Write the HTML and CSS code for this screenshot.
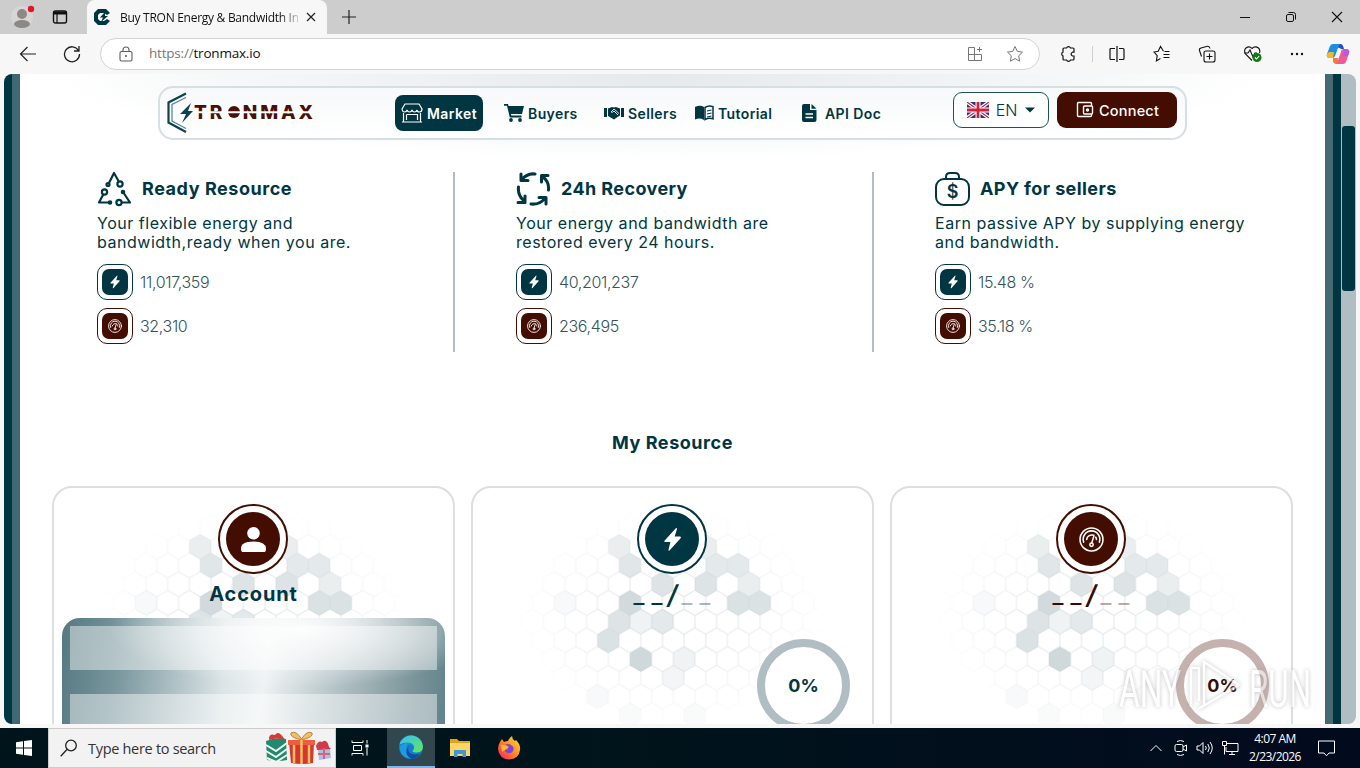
FILE: index.html
```html
<!DOCTYPE html>
<html lang="en">
  <head>
    <meta charset="utf-8" />
    <title>Buy TRON Energy &amp; Bandwidth Instantly</title>
    <link rel="stylesheet" href="styles.css">
  </head>
  <body>
    <!-- shared icons -->
    <svg class="defs" width="0" height="0">
      <defs>
        <symbol id="bolt" viewBox="0 0 24 24">
          <path fill="currentColor" d="M15.2 1.2 4.3 13.2q-.8 1.2.6 1.3H10L8.1 22q0 1.2 1 .6L19.8 10.7q.8-1.3-.6-1.5h-5.1l2.2-7.3q0-1.2-1.1-.7z" />
        </symbol>
        <symbol id="gauge" viewBox="0 0 24 24">
          <g fill="none" stroke="currentColor" stroke-width="1.5" stroke-linecap="round">
            <circle cx="12" cy="12" r="11" />
            <path d="M4.500 14.500a8 8 0 1 1 15 0M7.300 12a5.200 5.200 0 0 1 7-4M16.700 12q.2-1-.6-2.200" />
            <circle cx="12" cy="17" r="1.600" />
            <path d="m12.300 15 1.900-6" />
          </g>
        </symbol>
        <polygon id="hex" points="0,-12.5 10.8,-6.2 10.8,6.2 0,12.5 -10.8,6.2 -10.8,-6.2" />
        <pattern id="comb" width="21.65" height="37.46" patternUnits="userSpaceOnUse" patternTransform="translate(157 115)">
          <path d="M0-12.5 10.82-6.2V6.2L0 12.5M21.65-12.5 10.82-6.2M10.82 6.2 21.65 12.5M0 12.5V24.9L10.82 31.2 21.65 24.9V12.5M10.82 31.2V37.5" fill="none" stroke="#dde2e5" />
        </pattern>
        <radialGradient id="fade">
          <stop offset="0" stop-color="#fff" />
          <stop offset=".45" stop-color="#fff" stop-opacity=".75" />
          <stop offset="1" stop-color="#fff" stop-opacity="0" />
        </radialGradient>
        <mask id="fadeMask" maskUnits="userSpaceOnUse" x="0" y="0" width="399" height="260">
          <ellipse cx="200" cy="128" rx="158" ry="112" fill="url(#fade)" />
        </mask>
        <linearGradient id="edgeFill" x1="0" y1="0" x2="1" y2="1">
          <stop offset="0" stop-color="#35c1f1" />
          <stop offset="1" stop-color="#66e65a" />
        </linearGradient>
        <linearGradient id="foxFill" x1="1" y1="0" x2="0" y2="1">
          <stop offset="0" stop-color="#ffe14a" />
          <stop offset=".5" stop-color="#ff8a1d" />
          <stop offset="1" stop-color="#f5156c" />
        </linearGradient>
        <symbol id="hexes" viewBox="0 0 399 260">
          <rect width="399" height="260" fill="url(#comb)" mask="url(#fadeMask)" />
          <g fill="#c3ced2" transform="translate(-1 -1.3)">
            <use href="#hex" x="147.2" y="60.1" opacity=".35" />
            <use href="#hex" x="233.8" y="60.1" opacity=".35" />
            <use href="#hex" x="158" y="78.8" opacity=".5" />
            <use href="#hex" x="244.6" y="78.8" opacity=".45" />
            <use href="#hex" x="266.2" y="78.8" opacity=".45" />
            <use href="#hex" x="190.5" y="97.6" opacity=".55" />
            <use href="#hex" x="233.8" y="97.6" opacity=".55" />
            <use href="#hex" x="277.1" y="97.6" opacity=".35" />
            <use href="#hex" x="93.1" y="116.3" opacity=".12" />
            <use href="#hex" x="158" y="116.3" opacity=".75" />
            <use href="#hex" x="266.2" y="116.3" opacity=".6" />
            <use href="#hex" x="287.9" y="116.3" opacity=".6" />
            <use href="#hex" x="147.2" y="135" opacity=".55" />
            <use href="#hex" x="168.8" y="135" opacity=".25" />
            <use href="#hex" x="190.5" y="135" opacity=".45" />
            <use href="#hex" x="136.3" y="153.800" opacity=".6" />
            <use href="#hex" x="168.8" y="172.5" opacity=".8" />
            <use href="#hex" x="212.1" y="172.5" opacity=".25" />
            <use href="#hex" x="201.3" y="191.2" opacity=".2" />
            <use href="#hex" x="125.5" y="210" opacity=".12" />
            <use href="#hex" x="158" y="228.7" opacity=".1" />
            <use href="#hex" x="222.9" y="228.7" opacity=".1" />
          </g>
        </symbol>
      </defs>
    </svg>

    <div class="titlebar">
      <svg class="profile" width="24" height="28" viewBox="0 0 24 28">
        <circle cx="11" cy="14" r="11" fill="#d8d6d5" />
        <circle cx="11" cy="11" r="5" fill="#8c8886" />
        <ellipse cx="11" cy="21" rx="8" ry="4" fill="#8c8886" />
        <circle cx="20" cy="6" r="3.2" fill="#e3142a" />
      </svg>
      <svg class="tabs-icon" width="16" height="16" viewBox="0 0 16 16" fill="none" stroke="#111">
        <rect x="1.5" y="2" width="13" height="12" rx="2" stroke-width="1.4" />
        <path d="M1.5 4h13" stroke-width="3" />
        <path d="M5 4v10" stroke-width="1.2" />
      </svg>
      <div class="tab">
        <svg width="18" height="18" viewBox="0 0 18 18">
          <path d="M5 1h8l4 4-3 2-3-2H7L5 7v4l2 2h4l3-2 3 2-4 4H5l-4-4V5z" fill="#003642" />
          <path d="M12 4 7 9.5h3L8 14l7-6h-3z" fill="#003642" />
        </svg>
        <span class="tab-title">Buy TRON Energy &amp; Bandwidth In</span>
        <svg width="10" height="10" viewBox="0 0 10 10" stroke="#222" stroke-width="1.2"><path d="m1 1 8 8M9 1 1 9" /></svg>
      </div>
      <svg class="new-tab" width="14" height="14" viewBox="0 0 14 14" stroke="#222" stroke-width="1.2"><path d="M7 0v14M0 7h14" /></svg>
      <div class="window-buttons">
        <svg width="12" height="12" viewBox="0 0 12 12" fill="none" stroke="#111"><path d="M1 6.5h10" /></svg>
        <svg width="12" height="12" viewBox="0 0 12 12" fill="none" stroke="#111"><rect x="1.5" y="3.5" width="7" height="7" rx="1.5" /><path d="M3.5 1.5h5a2 2 0 0 1 2 2v5" /></svg>
        <svg width="12" height="12" viewBox="0 0 12 12" fill="none" stroke="#111" stroke-width="1.1"><path d="m1 1 10 10M11 1 1 11" /></svg>
      </div>
    </div>

    <div class="toolbar">
      <svg class="back" width="18" height="16" viewBox="0 0 18 16" fill="none" stroke="#222" stroke-width="1.2"><path d="M17 8H2M8.5 1 1.5 8l7 7" /></svg>
      <svg class="reload" width="18" height="18" viewBox="0 0 18 18" fill="none" stroke="#222" stroke-width="1.3"><path d="M15.5 5.5A7.5 7.5 0 1 0 16.5 9M16 1v5h-5" /></svg>
      <div class="address">
        <svg width="14" height="16" viewBox="0 0 14 16" fill="none" stroke="#5c5c5c" stroke-width="1.1"><rect x="1" y="5.5" width="12" height="9.5" rx="1.5" /><path d="M4 5.5V4a3 3 0 0 1 6 0v1.5" /><circle cx="7" cy="10" r=".5" /></svg>
        <span class="url"><span>https://</span>tronmax.io</span>
        <svg class="apps" width="16" height="16" viewBox="0 0 16 16" fill="none" stroke="#777"><path d="M7.5 1.5h-6v13h13V8.5h-13M7.500 1.5v13M12.5 1v5M10 3.5h5" /></svg>
        <svg class="star" width="18" height="18" viewBox="0 0 18 18" fill="none" stroke="#777" stroke-linejoin="round"><path d="m9 1.5 2.300 4.900 5.200.7-3.800 3.700.9 5.400L9 13.600l-4.600 2.600.9-5.400L1.500 7.100l5.200-.7z" /></svg>
      </div>
      <div class="tools">
        <svg width="18" height="18" viewBox="0 0 18 18" fill="none" stroke="#111" stroke-width="1.2"><path d="M5 3h2.500a2.200 2.200 0 0 1 4 0H14q1 0 1 1v3.200h-1.500a2 2 0 0 0 0 3.800H15v3q0 1-1 1h-2.500a2.200 2.200 0 0 1-4 0H5q-1 0-1-1v-3a2.200 2.200 0 0 1 0-4V4q0-1 1-1z" /></svg>
        <i></i>
        <svg width="18" height="18" viewBox="0 0 18 18" fill="none" stroke="#111" stroke-width="1.2"><path d="M7 3.500H3Q2 3.500 2 4.500v9q0 1 1 1h4M11 3.500h4q1 0 1 1v9q0 1-1 1h-4M9 1v16" /></svg>
        <svg width="18" height="18" viewBox="0 0 18 18" fill="none" stroke="#111" stroke-width="1.1"><path d="M10.500 6.300 7.500 1.500 5.200 6.200 1 7l3.200 3.600-.8 5.400 4-2.500M10.500 9.500h6M10.500 12.500h6M11.500 6.500h5" /></svg>
        <svg width="18" height="18" viewBox="0 0 18 18" fill="none" stroke="#111" stroke-width="1.1"><rect x="6" y="6" width="11" height="11" rx="2" /><path d="M11.500 8.500v6M8.500 11.500h6M3.500 11.500 1.500 5.500Q1 3.500 3 3l6.500-1.700Q11.500 1 12 3.500" /></svg>
        <svg width="20" height="18" viewBox="0 0 20 18" fill="none" stroke="#111" stroke-width="1.1"><path d="M9 15.500 2.500 9Q.5 5 3 3q3.500-2.500 6 .5Q12 .5 15.500 3q2 2 1 5M1 8h4l2-3 3 7 2-4h2" /><circle cx="14" cy="12.500" r="4.500" fill="#107c10" stroke="none" /><path d="m12 12.500 1.500 1.500 2.700-3" stroke="#fff" /></svg>
        <svg width="18" height="18" viewBox="0 0 18 18" fill="#111"><circle cx="4" cy="9" r="1.200" /><circle cx="9" cy="9" r="1.200" /><circle cx="14" cy="9" r="1.200" /></svg>
        <svg width="24" height="22" viewBox="0 0 24 22">
          <path d="M7 1h7q2.500 0 3 3l-5 1-3 8q-1 2-3 2H3q-3-1-2-4l3-8q1-2 3-2z" fill="#1d8ee6" />
          <path d="M3 9q2 0 5 0l-1 6H3q-3-1-2-4z" fill="#f5b822" />
          <path d="M15 6h6q3 1 2 4l-3 9q-1 2-3 2h-7q-2 0-3-3l5-1 3-8q0-3 3-3z" fill="#ec5c9c" />
          <path d="M7 15h5l-1 6q-3 0-4-3z" fill="#f47a35" />
          <path d="M14 1q3 0 4 5h-3l-3-2z" fill="#2054c8" />
          <path d="M18 6h3q3 1 2 4l-1 3h-5z" fill="#b65be0" />
        </svg>
      </div>
    </div>

    <div class="viewport">
      <main class="page">
        <header class="navbar">
          <svg class="logo" width="150" height="42" viewBox="0 0 150 42">
            <path d="M20 1.5 2.5 10.5v20L20 40" fill="none" stroke="#0b4350" stroke-width="2.200" />
            <path d="M20 5.500 6 12.500v16.500l14 7.500" fill="none" stroke="#5f8993" stroke-width="1.300" />
            <path d="m25 11-11 11h6l-4 9 11-12h-5z" fill="#0b4350" />
            <text x="28" y="27" textLength="119" class="logo-text">TR<tspan fill="none">O</tspan>NMAX</text>
            <circle cx="68" cy="20" r="6" fill="#4a1006" />
            <path d="M28 20.200h120" stroke="#fcfdfd" stroke-width="2" />
          </svg>
          <nav>
            <a class="active market">
              <svg width="22" height="20" viewBox="0 0 22 20" fill="none" stroke="#fff" stroke-width="1.200"><path d="M4 1h14l3 5q0 3-2.500 3T16 7q-.5 2-2.500 2T11 7q-.5 2-2.500 2T6 7q-.5 2-2.500 2T1 6zM2.500 10v9h17v-9M5.500 11.500h11V17M5.500 11.500V17M1 19h20" /></svg>
              Market
            </a>
            <a class="buyers">
              <svg width="20" height="18" viewBox="0 0 20 18" fill="#003642"><path d="M0 0h4l.6 2H20l-2 8H7l.3 1.600H17.500v1.800H5.800L3 1.800H0z" /><circle cx="7" cy="16" r="1.900" /><circle cx="16" cy="16" r="1.900" /></svg>
              Buyers
            </a>
            <a class="sellers">
              <svg width="20" height="14" viewBox="0 0 20 14"><path d="M0 2h3v9H0zM17 2h3v9h-3zM4 2.500 8 1l2 .5L12 1l4 1.500v7L12 12l-2 1.500L4 10z" fill="#003642" /><path d="m7 6 3-3 5 4.500M7 6q1.500 1 3-1l4 4" fill="none" stroke="#d5e0e3" /></svg>
              Sellers
            </a>
            <a class="tutorial">
              <svg width="19" height="16" viewBox="0 0 19 16"><path d="M0 2Q5-.5 9 2v13Q5 12.500 0 14.500z" fill="#003642" /><path d="M10 2.500q4-2.500 8-.7v12q-4-1.500-8 .7z" fill="none" stroke="#003642" stroke-width="1.500" /><path d="m12 6 4.500-1M12 9l4.500-1M12 12l4.500-1" stroke="#003642" stroke-width="1.200" /></svg>
              Tutorial
            </a>
            <a class="api">
              <svg width="15" height="18" viewBox="0 0 15 18"><path d="M2 0h6v6h6.500v10q0 2-2 2H2q-2 0-2-2V2Q0 0 2 0zM9.500 0l5 4.700h-5z" fill="#003642" /><path d="M3.500 10h7.500M3.500 13.500h7.500" stroke="#fff" stroke-width="1.300" /></svg>
              API Doc
            </a>
          </nav>
          <button class="lang">
            <svg width="22" height="16" viewBox="0 0 22 16">
              <path d="M0 0h22v16H0z" fill="#2b3386" />
              <path d="m0 0 22 16M22 0 0 16" stroke="#fff" stroke-width="3.500" />
              <path d="m0 0 22 16M22 0 0 16" stroke="#d0203c" stroke-width="1.200" />
              <path d="M11 0v16M0 8h22" stroke="#fff" stroke-width="5" />
              <path d="M11 0v16M0 8h22" stroke="#d0203c" stroke-width="2.800" />
            </svg>
            <span>EN</span>
            <svg width="10" height="6" viewBox="0 0 10 6"><path d="M0 .5h10L5 5.500z" fill="#003642" /></svg>
          </button>
          <button class="connect">
            <svg width="18" height="18" viewBox="0 0 18 18" fill="none" stroke="#fff" stroke-width="1.400"><path d="M15.500 5V2.500q0-1-1-1h-12q-1 0-1 1v12q0 1 1 1h12q1 0 1-1V13" /><rect x="7.500" y="5" width="9" height="8" rx="1" /><circle cx="11.500" cy="9" r="1" /></svg>
            Connect
          </button>
        </header>

        <section class="stats">
          <div class="stat">
            <h3>
              <svg width="35" height="36" viewBox="0 0 35 36" fill="none" stroke="#003642" stroke-width="2.200" stroke-linejoin="round">
                <path d="m12 12 5-10 4.500 8M6.500 23 2 31.500h10M26 21l7 10.500H24" />
                <circle cx="11" cy="13.500" r="1.500" /><circle cx="23" cy="13" r="2.600" /><circle cx="7.500" cy="21" r="2.600" /><circle cx="26" cy="21" r="1.200" /><circle cx="13" cy="31.500" r="1.200" /><circle cx="22" cy="31.500" r="2.600" />
              </svg>
              <span>Ready Resource</span>
            </h3>
            <p>Your flexible energy and<br />bandwidth,ready when you are.</p>
            <div class="amount"><b class="badge"><svg><use href="#bolt" /></svg></b><span>11,017,359</span></div>
            <div class="amount"><b class="badge red"><svg><use href="#gauge" /></svg></b><span>32,310</span></div>
          </div>
          <div class="stat">
            <h3>
              <svg width="35" height="36" viewBox="0 0 35 36" fill="none" stroke="#003642" stroke-width="3" stroke-linecap="round" stroke-linejoin="round">
                <path d="M19 3Q11 2 5.500 9M5 3v6.500h7M32.500 19q1-8-6-13.500M32 4.500h-6.500V11M2.500 16q-1 8 5.500 14M2 31.500h7V25M15 33q9 1 14-6M23 26.500h7V33" />
              </svg>
              <span>24h Recovery</span>
            </h3>
            <p>Your energy and bandwidth are<br />restored every 24 hours.</p>
            <div class="amount"><b class="badge"><svg><use href="#bolt" /></svg></b><span>40,201,237</span></div>
            <div class="amount"><b class="badge red"><svg><use href="#gauge" /></svg></b><span>236,495</span></div>
          </div>
          <div class="stat">
            <h3>
              <svg width="35" height="36" viewBox="0 0 35 36" fill="none" stroke="#003642" stroke-width="2">
                <path d="M11 8V6q0-4 4-4h5q4 0 4 4v2" />
                <rect x="1" y="8" width="33" height="26" rx="8" />
                <text x="17.500" y="26.500" text-anchor="middle" class="dollar">$</text>
              </svg>
              <span>APY for sellers</span>
            </h3>
            <p>Earn passive APY by supplying energy<br />and bandwidth.</p>
            <div class="amount"><b class="badge"><svg><use href="#bolt" /></svg></b><span>15.48 %</span></div>
            <div class="amount"><b class="badge red"><svg><use href="#gauge" /></svg></b><span>35.18 %</span></div>
          </div>
        </section>

        <h2>My Resource</h2>

        <section class="cards">
          <div class="card">
            <svg class="hexes"><use href="#hexes" /></svg>
            <div class="circle red">
              <b><svg viewBox="0 0 24 24" fill="#fff"><circle cx="12" cy="6" r="6" /><path d="M0 21q0-7 12-7t12 7q0 3-2 3H2q-2 0-2-3z" /></svg></b>
            </div>
            <h4>Account</h4>
            <div class="panel">
              <div class="row"></div>
              <div class="row"></div>
            </div>
          </div>
          <div class="card">
            <svg class="hexes"><use href="#hexes" /></svg>
            <div class="circle"><b><svg><use href="#bolt" /></svg></b></div>
            <div class="usage"><span>_</span><span>_</span><em>/</em><span class="dim">_</span><span class="dim">_</span></div>
            <div class="percent">0%</div>
          </div>
          <div class="card maroon">
            <svg class="hexes"><use href="#hexes" /></svg>
            <div class="circle red"><b><svg><use href="#gauge" /></svg></b></div>
            <div class="usage"><span>_</span><span>_</span><em>/</em><span class="dim">_</span><span class="dim">_</span></div>
            <div class="percent">0%</div>
          </div>
        </section>
      </main>
      <div class="scrollbar"><div class="thumb"></div></div>
    </div>

    <svg class="watermark" width="200" height="70" viewBox="0 0 200 70">
      <text x="3" y="57" textLength="62" lengthAdjust="spacingAndGlyphs">ANY</text>
      <text x="133" y="57" textLength="62" lengthAdjust="spacingAndGlyphs">RUN</text>
      <path d="M75 57V18h8v33M88 56V12l35 23-41 24" fill="none" stroke="#fff" stroke-width="2.500" />
    </svg>

    <div class="taskbar">
      <div class="start">
        <svg width="16" height="16" viewBox="0 0 16 16" fill="#fff"><path d="M0 2.200 7 1.200v6.300H0zM8 1l8-1v7.500H8zM0 8.500h7v6.300l-7-1zM8 8.500h8V16l-8-1z" /></svg>
      </div>
      <div class="search">
        <svg width="18" height="18" viewBox="0 0 18 18" fill="none" stroke="#222" stroke-width="1.300"><circle cx="11" cy="6.500" r="5.300" /><path d="m7.200 10.300-6.500 7" /></svg>
        <span>Type here to search</span>
        <svg class="gifts" width="68" height="34" viewBox="0 0 66 34">
          <path d="M1 10q9-4 20-2l1 21q-9 2-20 0z" fill="#1f8a70" />
          <path d="m1 14 10 6 11-8M1 20l10 6 11-8M2 27l9 4 11-7" fill="none" stroke="#f3f6ee" stroke-width="2" />
          <path d="M4 8q0-6 6-4 3-5 8 2l2 3q-8-3-16 0z" fill="#d33b34" />
          <path d="M24 11h25l-1 21q-11 2-22 0z" fill="#d6362b" />
          <path d="M23 9h27v5H23z" fill="#ef5c3f" />
          <path d="M36.500 9Q24 6 26 2q5-3 10.500 6Q42-1 47 2q2 4-10.500 7z" fill="#f0c069" stroke="#b98535" />
          <path d="M29 14v18M36.500 9v24M44 14v18" stroke="#f0c069" stroke-width="2.500" />
          <path d="M53 18h12l1 9-12 2z" fill="#a9bfe4" />
          <path d="M51 15q2-6 6-4 5-4 7 5l2 2-14 1z" fill="#cf3c48" />
          <path d="M59 17v11M53 23h12" stroke="#d7637a" stroke-width="2" />
        </svg>
      </div>
      <div class="task view">
        <svg width="18" height="16" viewBox="0 0 18 16" fill="none" stroke="#fff"><path d="M1 .5v2h11v-2M1 15.500v-2h11v2M2.500 5.500h8v5h-8zM16 0v3.500M16 8v7.500" /><path d="M14.500 4.500h3v3h-3z" fill="#fff" stroke="none" /></svg>
      </div>
      <div class="task open">
        <svg width="24" height="24" viewBox="0 0 24 24">
          <circle cx="12" cy="12" r="12" fill="#147bd1" />
          <path d="M.5 9.500A12 12 0 0 1 24 11q0 6-6 6.500-4 0-4.500-1.500 2-2 1.500-4.500-1-3.500-6-4-5 0-8.500 2z" fill="url(#edgeFill)" />
          <path d="M8 10q-3 9 5 13.500Q3 24 1 15 0 10 5 8.500 10 7 14 10q-4-1.500-6 0z" fill="#1b9de2" />
          <path d="M9.500 11q-2 7 5 8.500 4 .5 7-1.500-4 6-9 6-6-3-5-9z" fill="#0c4fa0" />
        </svg>
      </div>
      <div class="task">
        <svg width="22" height="20" viewBox="0 0 22 20"><path d="M1 1h7l2 2h11v6H1z" fill="#e5a01c" /><path d="M1 5h20v13H1z" fill="#ffd666" /><path d="M5 19v-6q0-1 1-1h10q1 0 1 1v6h-3.500v-3h-5v3z" fill="#3f97d8" /></svg>
      </div>
      <div class="task">
        <svg width="24" height="24" viewBox="0 0 24 24">
          <path d="M3 6 5 3l2 3q2-1 4-1 1-3 4-5 0 3 3 5l1-1q5 5 4 10-1 9-11 9.500Q2 23 1 13q0-4 2-7z" fill="url(#foxFill)" />
          <path d="M8 9q3-2 6 0 4 2 2 6-2 3-5 2-4-1-3-4 2 1 3 0-3-2-3-4z" fill="#8141d8" />
          <path d="M4 9q4-1 8 2l-4 3-3 2z" fill="#ffb52e" />
        </svg>
      </div>
      <div class="tray">
        <svg width="12" height="8" viewBox="0 0 12 8"><path d="m.5 7 5.500-5.500L11.500 7" /></svg>
        <svg width="14" height="18" viewBox="0 0 14 18"><rect x="1" y="5.500" width="8" height="7" rx="1.500" /><path d="m9 8 3.500-2v6L9 10M3 2.500q3.500-2 7 0M3 15.500q3.500 2 7 0" /></svg>
        <svg width="18" height="14" viewBox="0 0 18 14"><path d="M1 5h2.500L7 1.500v11L3.500 9H1zM9.500 5q1.500 2 0 4M11.800 3q3 4 0 8M14 1q4.500 6 0 12" /></svg>
        <svg width="17" height="15" viewBox="0 0 17 15"><path d="M5 2.500h11v8H4V6M10 10.500v3M7 13.500h6M.5.500h4v4h-4zM2.500 4.500v9" /></svg>
        <div class="clock">4:07 AM<br />2/23/2026</div>
        <svg width="17" height="17" viewBox="0 0 17 17"><path d="M.5 1h16v12H11l-2.500 2.800L6 13H.5z" /></svg>
      </div>
    </div>
  </body>
</html>
```

FILE: styles.css
```css
* {
  box-sizing: border-box;
}
body {
  margin: 0;
  width: 1360px;
  height: 768px;
  overflow: hidden;
  display: flex;
  flex-direction: column;
  background: #f7f7f7;
  font-family: "Open Sans", "Noto Sans", sans-serif;
}
svg {
  flex: none;
  display: block;
}
.defs {
  position: absolute;
}

/* browser window */
.titlebar {
  height: 34px;
  flex: none;
  display: flex;
  align-items: center;
  background: #cdcdcd;
}
.profile {
  margin-left: 11px;
}
.tabs-icon {
  margin-left: 17px;
}
.tab {
  width: 240px;
  height: 34px;
  margin-left: 19px;
  padding: 0 11px 0 6px;
  display: flex;
  align-items: center;
  background: #f7f7f7;
  border-radius: 8px 8px 0 0;
}
.tab-title {
  width: 179px;
  margin: 0 8px 0 9px;
  overflow: hidden;
  white-space: nowrap;
  font-size: 12px;
  letter-spacing: -0.28px;
  color: transparent;
  background: linear-gradient(90deg, #111 160px, #f7f7f7 183px);
  -webkit-background-clip: text;
  background-clip: text;
}
.new-tab {
  margin-left: 15px;
}
.window-buttons {
  margin-left: auto;
  padding-right: 17px;
  display: flex;
  gap: 34px;
}
.toolbar {
  height: 40px;
  flex: none;
  display: flex;
  align-items: center;
}
.back {
  margin-left: 19px;
}
.reload {
  margin-left: 26px;
}
.address {
  width: 943px;
  height: 32px;
  margin-left: 19px;
  padding: 0 15px 0 18px;
  display: flex;
  align-items: center;
  background: #fff;
  border: 1px solid #d3d3d3;
  border-radius: 16px;
}
.url {
  margin: -2px 0 0 16px;
  font-size: 13.5px;
  letter-spacing: -0.2px;
  color: #111;
}
.url span {
  color: #767676;
}
.apps {
  margin-left: auto;
  margin-right: 23px;
}
.tools {
  flex: 1;
  padding: 0 10px 0 19px;
  display: flex;
  align-items: center;
  gap: 27px;
}
.tools i {
  width: 1px;
  height: 16px;
  margin: 0 -12px;
  background: #cfcfcf;
}
.tools svg:last-child {
  margin-left: -7px;
}
.tools svg:nth-last-child(2) {
  margin-left: -2px;
}

.viewport {
  width: 1352px;
  height: 650px;
  margin: 0 4px;
  flex: none;
  display: flex;
  overflow: hidden;
  border-radius: 8px;
  font-family: Inter, "Open Sans", sans-serif;
  color: #003642;
}
.page {
  width: 1337px;
  padding: 12px 32px 0 32px;
  border-style: solid;
  border-width: 0 8px;
  border-color: #003642;
  background: radial-gradient(ellipse 600px 85px at 49% 0, #e6e9ea, #f5f7f8 70%, rgba(255, 255, 255, 0)), #fff;
  box-shadow: inset 8px 0 #3e6872, inset -8px 0 #456a72;
}
.scrollbar {
  width: 15px;
  padding: 52px 1px 0;
  background: #b0bec3;
}
.thumb {
  height: 165px;
  border-radius: 3px;
  background: #003642;
}

/* top menu */
.navbar {
  width: 1029px;
  height: 54px;
  margin-left: 114px;
  padding-left: 6px;
  display: flex;
  align-items: center;
  border: 2px solid #d6dfe2;
  border-radius: 15px;
  background: linear-gradient(#f7f9fa, #fff);
}
.logo-text {
  font: 800 19px Inter, sans-serif;
  fill: #4a1006;
}
nav {
  width: 558px;
  margin-left: 79px;
  display: flex;
  align-items: center;
}
nav a {
  height: 36px;
  display: flex;
  align-items: center;
  gap: 4px;
  white-space: nowrap;
  font-size: 14px;
  font-weight: 600;
  letter-spacing: 0.4px;
}
nav .active {
  padding-left: 6px;
  background: #003642;
  color: #fff;
  border-radius: 8px;
}
.market {
  width: 88px;
  margin-right: 21px;
}
.buyers {
  width: 100px;
}
.sellers {
  width: 91px;
}
.tutorial {
  width: 107px;
}
nav .api {
  gap: 8px;
}
.lang,
.connect {
  height: 36px;
  margin: -6px 8px 0 0;
  padding: 0;
  display: flex;
  align-items: center;
  font-family: inherit;
  border-radius: 9px;
}
.lang {
  width: 96px;
  padding-left: 13px;
  border: 1px solid #1f4f5a;
  background: #fdfefe;
  color: #003642;
  font-size: 16px;
  font-weight: 300;
}
.lang span {
  width: 31px;
  margin-left: 5px;
  padding-right: 6px;
}
.connect {
  width: 120px;
  padding-left: 19px;
  gap: 5px;
  border: none;
  background: #430d01;
  color: #fff;
  font-size: 14.5px;
  font-weight: 500;
  letter-spacing: 0.2px;
}

/* numbers under the menu */
.stats {
  margin-top: 32px;
  display: grid;
  grid-template-columns: repeat(3, 403px);
  gap: 16px;
}
.stats,
.cards {
  margin-left: 8px;
}
.stat {
  height: 180px;
  padding-left: 45px;
  border-right: 2px solid #b0bec3;
  white-space: nowrap;
}
.stat:last-child {
  border-right: none;
}
h3 {
  height: 34px;
  margin: 0;
  display: flex;
  align-items: center;
  gap: 10px;
  font-size: 18px;
  font-weight: 700;
  letter-spacing: 0.55px;
}
h3 span {
  margin-top: -2px;
}
.stat:nth-child(n + 2) h3 {
  letter-spacing: 0.4px;
}
.dollar {
  font: 600 18px Inter, sans-serif;
  letter-spacing: 0;
  fill: #003642;
  stroke: none;
}
.stat p {
  margin: 8px 0 12px;
  font-size: 16px;
  line-height: 19px;
  letter-spacing: 0.52px;
}
.amount {
  height: 36px;
  margin-bottom: 8px;
  display: flex;
  align-items: center;
  gap: 7px;
  font-size: 16px;
  font-weight: 300;
  letter-spacing: -0.35px;
  color: #35545c;
}
.badge {
  width: 36px;
  height: 36px;
  display: grid;
  place-items: center;
  border: 1px solid #003642;
  border-radius: 10px;
  background: #fff;
  color: #fff;
}
.badge::before {
  content: "";
  grid-area: 1 / 1;
  width: 26px;
  height: 26px;
  border-radius: 7px;
  background: #003642;
}
.badge svg {
  grid-area: 1 / 1;
  width: 14px;
  height: 14px;
  z-index: 1;
}
.badge.red {
  border-color: #430d01;
}
.badge.red::before {
  background: #430d01;
}
h2 {
  height: 24px;
  margin: 79px 0 31px 1px;
  padding-right: 1px;
  line-height: 24px;
  text-align: center;
  font-size: 18px;
  font-weight: 700;
  letter-spacing: 0.55px;
}

/* resource cards */
.cards {
  display: grid;
  grid-template-columns: repeat(3, 403px);
  gap: 16px;
}
.card {
  height: 300px;
  padding: 16px 8px 0;
  position: relative;
  display: flex;
  flex-direction: column;
  align-items: center;
  border: 2px solid #dcdfe0;
  border-radius: 20px;
  background: #fff;
}
.hexes {
  position: absolute;
  left: 0;
  top: 0;
  width: 399px;
  height: 260px;
}
.circle {
  width: 70px;
  height: 70px;
  margin-right: 1px;
  padding: 6px;
  z-index: 1;
  border: 2px solid #003642;
  border-radius: 50%;
  background: #fff;
}
.circle b {
  height: 54px;
  display: grid;
  place-items: center;
  border-radius: 50%;
  background: #003642;
  color: #fff;
}
.circle svg {
  width: 25px;
  height: 25px;
}
.circle.red {
  border-color: #430d01;
}
.circle.red b {
  background: #430d01;
}
h4 {
  margin: 8px 0 12px;
  z-index: 1;
  line-height: 24px;
  font-size: 20px;
  font-weight: 700;
  letter-spacing: 0.85px;
}
.panel {
  width: 383px;
  height: 200px;
  padding: 8px;
  z-index: 1;
  display: flex;
  flex-direction: column;
  gap: 24px;
  border-radius: 18px 18px 0 0;
  background:
    radial-gradient(ellipse 190px 60px at 62% 6%, #fbfcfc, rgba(255, 255, 255, 0)),
    linear-gradient(97deg, #557880 0, #78969d 15%, #dbe4e6 42%, #eef2f3 52%, #b4c3c7 70%, #789298 90%, #5d8088 100%);
}
.row {
  height: 44px;
  background: rgba(255, 255, 255, 0.45);
}
.usage {
  height: 42px;
  z-index: 1;
  display: flex;
  align-items: flex-start;
  gap: 6px;
  font-size: 24px;
  line-height: 30px;
}
.usage span {
  width: 12px;
  padding-top: 6px;
}
.usage em {
  margin: 5px -2px 0;
  font-size: 26px;
  font-weight: 600;
  line-height: 32px;
}
.usage .dim {
  opacity: 0.35;
}
.maroon .usage,
.maroon .percent {
  color: #360b03;
}
.percent {
  width: 93px;
  height: 93px;
  margin: 23px 14px 0 0;
  z-index: 1;
  align-self: flex-end;
  display: grid;
  place-items: center;
  border: 8px solid #b0bec3;
  border-radius: 50%;
  background: #fff;
  font-size: 18px;
  font-weight: 700;
}
.maroon .percent {
  border-color: #c5b1ae;
}

.watermark {
  position: absolute;
  left: 1116px;
  top: 650px;
  z-index: 2;
  opacity: 0.6;
  filter: drop-shadow(0 0 2px #999);
}
.watermark text {
  font: 400 52px Roboto, sans-serif;
  fill: #fff;
}

/* taskbar */
.taskbar {
  height: 40px;
  margin-top: 4px;
  flex: none;
  display: flex;
  background: linear-gradient(90deg, #00151b 40%, #020a1e);
}
.start {
  width: 48px;
  display: grid;
  place-items: center;
}
.search {
  width: 288px;
  padding: 0 3px 0 11px;
  display: flex;
  align-items: center;
  border: 1px solid #ccc;
  background: #f2f2f2;
  white-space: nowrap;
}
.search span {
  margin-left: 10px;
  font-size: 14.5px;
  letter-spacing: -0.3px;
  color: #333;
}
.gifts {
  margin-left: auto;
}
.task {
  width: 49px;
  display: grid;
  place-items: center;
}
.view {
  width: 51px;
  padding-right: 3px;
}
.open {
  width: 48px;
  background: #32464e;
  border-bottom: 2px solid #76b9ed;
}
.tray {
  margin-left: auto;
  padding-right: 25px;
  display: flex;
  align-items: center;
  gap: 8px;
  fill: none;
  stroke: #fff;
  color: #fff;
}
.tray svg:first-child {
  margin-right: 4px;
}
.clock {
  width: 56px;
  margin-right: 7px;
  text-align: center;
  white-space: nowrap;
  font-size: 12px;
  line-height: 18px;
  letter-spacing: -0.55px;
}
```
